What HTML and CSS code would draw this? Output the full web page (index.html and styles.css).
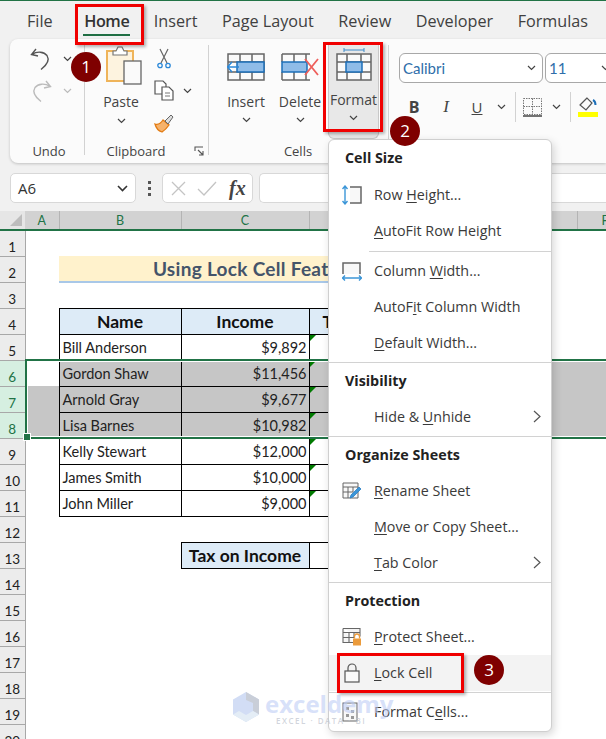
FILE: index.html
```html
<!DOCTYPE html>
<html lang="en">
<head>
<meta charset="utf-8">
<title>Lock Cell</title>
<link rel="stylesheet" href="styles.css">
</head>
<body>
<div class="app">
  <nav class="tabs">
    <span>File</span><span class="tab-home">Home</span><span>Insert</span><span>Page Layout</span><span>Review</span><span>Developer</span><span>Formulas</span>
  </nav>

  <section class="ribbon">
    <div class="group g-undo">
      <div class="g-body undo-grid">
        <svg width="22" height="24" viewBox="0 0 22 24"><path d="M6 2 1.500 7.500 8 9M2 7.500c5-3.500 12-3 15 1 2.500 4 .5 9-6 14" fill="none" stroke="#555" stroke-width="1.400"/></svg>
        <svg class="chev" width="9" height="6" viewBox="0 0 9 6"><path d="m1 1 3.500 3.500L8 1" fill="none" stroke="#444" stroke-width="1.200"/></svg>
        <svg width="22" height="24" viewBox="0 0 22 24"><path d="m16 2 4.500 5.500L14 9M20 7.500c-5-3.500-12-3-15 1-2.500 4-.5 9 6 14" fill="none" stroke="#bbb" stroke-width="1.400"/></svg>
        <svg class="chev" width="9" height="6" viewBox="0 0 9 6"><path d="m1 1 3.500 3.500L8 1" fill="none" stroke="#bbb" stroke-width="1.200"/></svg>
      </div>
      <div class="g-label undo-label">Undo</div>
    </div>

    <div class="group g-clip">
      <div class="g-body clip-body">
        <div class="big-btn paste">
          <svg class="paste-ico" width="36" height="40" viewBox="0 0 36 40"><rect x="1" y="6" width="26" height="30" fill="#fdf3df" stroke="#efb45a" stroke-width="2"/><path d="M7 6h3l2-4h4l2 4h3v4H7z" fill="#fff" stroke="#777" stroke-width="1.200"/><rect x="18" y="16" width="17" height="23" fill="#fafafa" stroke="#666" stroke-width="1.300"/></svg>
          <span>Paste</span>
          <svg class="chev" width="9" height="6" viewBox="0 0 9 6"><path d="m1 1 3.500 3.500L8 1" fill="none" stroke="#444" stroke-width="1.200"/></svg>
        </div>
        <div class="clip-tools">
          <svg class="tool-cut" width="14" height="21" viewBox="0 0 14 21"><path d="M3 1l7 14M11 1 4 15" fill="none" stroke="#666" stroke-width="1.200"/><circle cx="3" cy="17.500" r="2.200" fill="none" stroke="#2b88d8" stroke-width="1.300"/><circle cx="11" cy="17.500" r="2.200" fill="none" stroke="#2b88d8" stroke-width="1.300"/></svg>
          <div class="copy-row">
            <svg width="21" height="21" viewBox="0 0 21 21"><path d="M8 14H1V1h8l3 3v3" fill="#fff" stroke="#555" stroke-width="1.200"/><path d="M8 7h7l4 4v9H8z" fill="#fff" stroke="#555" stroke-width="1.200"/><path d="M11 13h5M11 16h5" stroke="#777"/></svg>
            <svg class="chev" width="9" height="6" viewBox="0 0 9 6"><path d="m1 1 3.500 3.500L8 1" fill="none" stroke="#444" stroke-width="1.200"/></svg>
          </div>
          <svg width="21" height="20" viewBox="0 0 21 20"><path d="M1 11c3 1 6-1 8-4l6 5c-2 3-4 5-7 7-3-1-6-4-7-8z" fill="#f6b26b" stroke="#e27b12" stroke-width="1.300"/><path d="m11 8 6-6 2 2-5 7z" fill="#ddd" stroke="#666"/></svg>
        </div>
      </div>
      <div class="g-label clip-label">Clipboard</div>
      <svg class="launcher" width="10" height="10" viewBox="0 0 10 10"><path d="M1 5V1h8M4 4l5 5M9 5v4H5" fill="none" stroke="#555" stroke-width="1.100"/></svg>
    </div>

    <div class="group g-cells">
      <div class="g-body cells-body">
        <div class="big-btn cell-btn">
          <svg width="38" height="28" viewBox="0 0 38 28"><path d="M1 1h36v26H1zM13 1v26M25 1v26M1 9h36M1 19h36" fill="#fafafa" stroke="#666" stroke-width="1.500"/><rect x="10" y="9" width="27" height="10" fill="#8fbce8" stroke="#1d6fb8" stroke-width="1.500"/><path d="M12 14H1m4-5-4.500 5L5 19" fill="#fff" stroke="#2b88d8" stroke-width="1.500"/></svg>
          <span>Insert</span>
          <svg class="chev" width="9" height="6" viewBox="0 0 9 6"><path d="m1 1 3.500 3.500L8 1" fill="none" stroke="#444" stroke-width="1.200"/></svg>
        </div>
        <div class="big-btn cell-btn">
          <svg width="38" height="28" viewBox="0 0 38 28"><path d="M1 1h28M1 27h28M1 1v8M13 1v8M25 1v8M1 19v8M13 19v8M25 19v8" fill="none" stroke="#666" stroke-width="1.500"/><rect x="1" y="9" width="25" height="10" fill="#8fbce8" stroke="#1d6fb8" stroke-width="1.500"/><path d="m24 6 13 16M37 6 24 22" stroke="#ee5f5b" stroke-width="1.800"/></svg>
          <span>Delete</span>
          <svg class="chev" width="9" height="6" viewBox="0 0 9 6"><path d="m1 1 3.500 3.500L8 1" fill="none" stroke="#444" stroke-width="1.200"/></svg>
        </div>
        <div class="big-btn format-btn">
          <svg width="36" height="35" viewBox="0 0 36 35"><path d="M8 1v4M8 3h20M28 1v4" stroke="#3c8ac9" fill="none"/><path d="M1 7h34v26H1zM1 15h34M1 25h34M11 7v26M25 7v26" fill="#fafafa" stroke="#666" stroke-width="1.500"/><rect x="10" y="15" width="16" height="10" fill="#8fbce8" stroke="#1d6fb8" stroke-width="1.500"/></svg>
          <span>Format</span>
          <svg class="chev" width="9" height="6" viewBox="0 0 9 6"><path d="m1 1 3.500 3.500L8 1" fill="none" stroke="#444" stroke-width="1.200"/></svg>
        </div>
      </div>
      <div class="g-label cells-label">Cells</div>
    </div>

    <div class="group g-font">
      <div class="combos">
        <div class="combo c-name"><span>Calibri</span><svg class="chev" width="9" height="6" viewBox="0 0 9 6"><path d="m1 1 3.500 3.500L8 1" fill="none" stroke="#444" stroke-width="1.200"/></svg></div>
        <div class="combo c-size"><span>11</span><svg class="chev" width="9" height="6" viewBox="0 0 9 6"><path d="m1 1 3.500 3.500L8 1" fill="none" stroke="#444" stroke-width="1.200"/></svg></div>
      </div>
      <div class="font-tools">
        <b class="ft ft-b">B</b><i class="ft ft-i">I</i><u class="ft ft-u">U</u>
        <svg class="chev" width="9" height="6" viewBox="0 0 9 6"><path d="m1 1 3.500 3.500L8 1" fill="none" stroke="#444" stroke-width="1.200"/></svg>
        <span class="vsep"></span>
        <svg class="bord" width="19" height="19" viewBox="0 0 19 19"><path d="M.5.5h18v16H.5zM9.500.5v16M.5 8.500h18" fill="none" stroke="#777" stroke-dasharray="1.500 1"/><path d="M0 18h19" stroke="#444" stroke-width="1.500"/></svg>
        <svg class="chev" width="9" height="6" viewBox="0 0 9 6"><path d="m1 1 3.500 3.500L8 1" fill="none" stroke="#444" stroke-width="1.200"/></svg>
        <span class="vsep"></span>
        <svg class="fill" width="20" height="20" viewBox="0 0 20 20"><path d="M9 1 2 8l6 5 6-7z" fill="none" stroke="#555" stroke-width="1.200"/><path d="M15 3c2 1 2.500 3 2.500 5" fill="none" stroke="#1d6fb8" stroke-width="2"/><rect y="15" width="20" height="5" fill="#ffff00"/></svg>
      </div>
    </div>
  </section>

  <section class="fbar">
    <div class="namebox"><span>A6</span><svg width="11" height="7" viewBox="0 0 11 7"><path d="m1 1 4.500 4.500L10 1" fill="none" stroke="#333" stroke-width="1.600"/></svg></div>
    <div class="dots"><i></i><i></i><i></i></div>
    <div class="fxbox">
      <svg width="15" height="15" viewBox="0 0 15 15"><path d="m1 1 13 13M14 1 1 14" stroke="#c4c4c4" stroke-width="1.300"/></svg>
      <svg width="20" height="15" viewBox="0 0 20 15"><path d="m1 8 6 6L19 1" fill="none" stroke="#c4c4c4" stroke-width="1.300"/></svg>
      <span class="fx">fx</span>
    </div>
    <div class="finput"></div>
  </section>

  <section class="sheet">
    <table class="grid">
      <colgroup><col class="c0"><col class="c1"><col class="c2"><col class="c3"><col class="c4"><col class="c5"><col class="c6"></colgroup>
      <thead>
        <tr><th class="corner"><span class="tri"></span></th><th class="ch">A</th><th class="ch">B</th><th class="ch">C</th><th class="ch">D</th><th class="ch">E</th><th class="ch">F</th></tr>
      </thead>
      <tbody>
        <tr><th class="rh">1</th></tr>
        <tr><th class="rh">2</th><td></td><td class="title" colspan="3">Using Lock Cell Feature</td></tr>
        <tr><th class="rh">3</th></tr>
        <tr><th class="rh">4</th><td></td><td class="hd">Name</td><td class="hd">Income</td><td class="hd hd-tax">Tax</td></tr>
        <tr><th class="rh">5</th><td></td><td class="bx">Bill Anderson</td><td class="bx num">$9,892</td><td class="bx flag"></td></tr>
        <tr class="sel"><th class="rh on">6</th><td class="plain"></td><td class="bx">Gordon Shaw</td><td class="bx num">$11,456</td><td class="bx flag"></td><td></td><td></td></tr>
        <tr class="sel"><th class="rh on">7</th><td></td><td class="bx">Arnold Gray</td><td class="bx num">$9,677</td><td class="bx flag"></td><td></td><td></td></tr>
        <tr class="sel"><th class="rh on">8</th><td></td><td class="bx">Lisa Barnes</td><td class="bx num">$10,982</td><td class="bx flag"></td><td></td><td></td></tr>
        <tr><th class="rh">9</th><td></td><td class="bx">Kelly Stewart</td><td class="bx num">$12,000</td><td class="bx flag"></td></tr>
        <tr><th class="rh">10</th><td></td><td class="bx">James Smith</td><td class="bx num">$10,000</td><td class="bx flag"></td></tr>
        <tr><th class="rh">11</th><td></td><td class="bx">John Miller</td><td class="bx num">$9,000</td><td class="bx flag"></td></tr>
        <tr><th class="rh">12</th></tr>
        <tr><th class="rh">13</th><td></td><td></td><td class="hd tax">Tax on Income</td><td class="bx"></td></tr>
        <tr><th class="rh">14</th></tr>
        <tr><th class="rh">15</th></tr>
        <tr><th class="rh">16</th></tr>
        <tr><th class="rh">17</th></tr>
        <tr><th class="rh">18</th></tr>
        <tr><th class="rh">19</th></tr>
        <tr><th class="rh">20</th></tr>
      </tbody>
    </table>
    <div class="selection"></div>
  </section>

  <aside class="menu">
    <div class="m-head m-first">Cell Size</div>
    <div class="m-item">
      <svg class="m-ico" width="20" height="20" viewBox="0 0 20 20"><path d="M8 2h11v16H8" fill="#f8f8f8" stroke="#666" stroke-width="1.500"/><path d="M3 1v18M.5 4 3 1l2.500 3M.5 16 3 19l2.500-3" fill="none" stroke="#3c96d8" stroke-width="1.400"/></svg>
      <span>Row <u>H</u>eight...</span>
    </div>
    <div class="m-item"><span><u>A</u>utoFit Row Height</span></div>
    <div class="sep sep-first"></div>
    <div class="m-item">
      <svg class="m-ico" width="20" height="20" viewBox="0 0 20 20"><path d="M1 13V2h17v11" fill="#f8f8f8" stroke="#666" stroke-width="1.500"/><path d="M0 17h20M3 14.500.5 17 3 19.500M17 14.500l2.500 2.500-2.500 2.500" fill="none" stroke="#3c96d8" stroke-width="1.400"/></svg>
      <span>Column <u>W</u>idth...</span>
    </div>
    <div class="m-item"><span>AutoF<u>i</u>t Column Width</span></div>
    <div class="m-item"><span><u>D</u>efault Width...</span></div>
    <div class="sep"></div>
    <div class="m-head">Visibility</div>
    <div class="m-item"><span>Hide &amp; <u>U</u>nhide</span><svg class="arrow" width="8" height="13" viewBox="0 0 8 13"><path d="m1 1 6 5.500L1 12" fill="none" stroke="#555" stroke-width="1.200"/></svg></div>
    <div class="sep"></div>
    <div class="m-head">Organize Sheets</div>
    <div class="m-item">
      <svg class="m-ico" width="20" height="18" viewBox="0 0 20 18"><path d="M1 1h15v15H1zM1 5h15M1 10h10M6 5v11M11 5v5" fill="#f8f8f8" stroke="#666"/><path d="m8 16 1-3 8-8 2 2-8 8z" fill="#3c96d8" stroke="#2b7fc4" stroke-width=".8"/></svg>
      <span><u>R</u>ename Sheet</span>
    </div>
    <div class="m-item"><span><u>M</u>ove or Copy Sheet...</span></div>
    <div class="m-item"><span><u>T</u>ab Color</span><svg class="arrow" width="8" height="13" viewBox="0 0 8 13"><path d="m1 1 6 5.500L1 12" fill="none" stroke="#555" stroke-width="1.200"/></svg></div>
    <div class="sep"></div>
    <div class="m-head">Protection</div>
    <div class="m-item">
      <svg class="m-ico" width="20" height="19" viewBox="0 0 20 19"><path d="M1 1h17v8M1 1v14h10M1 5h17M1 10h11M7 5v10M12 5v5" fill="#f4f4f4" stroke="#666" stroke-width="1.100"/><rect x="11" y="11" width="8" height="7" fill="#eb9b3c"/><path d="M12.500 11V9a2.500 2.500 0 0 1 5 0v2" fill="none" stroke="#eb9b3c" stroke-width="1.300"/></svg>
      <span><u>P</u>rotect Sheet...</span>
    </div>
    <div class="m-item m-hover">
      <svg class="m-ico" width="16" height="20" viewBox="0 0 16 20"><rect x="1" y="8" width="14" height="11" fill="#fafafa" stroke="#555" stroke-width="1.200"/><path d="M4 8V5a4 4 0 0 1 8 0v3" fill="none" stroke="#555" stroke-width="1.200"/></svg>
      <span><u>L</u>ock Cell</span>
    </div>
    <div class="sep"></div>
    <div class="m-item m-last">
      <svg class="m-ico" width="16" height="20" viewBox="0 0 16 20"><rect x="1" y="1" width="14" height="18" fill="#f8f8f8" stroke="#666"/><path d="M4 5h3v3H4zM9 8h3v3H9zM4 12h3v3H4zM9 14h3v3H9z" fill="#999"/></svg>
      <span>Format C<u>e</u>lls...</span>
    </div>
  </aside>

  <div class="redbox rb-home"></div>
  <div class="redbox rb-format"></div>
  <div class="redbox rb-lock"></div>
  <div class="badge b1">1</div>
  <div class="badge b2">2</div>
  <div class="badge b3">3</div>

  <div class="watermark">
    <svg width="28" height="31" viewBox="0 0 28 31"><path d="M14 0 27 7.500v15L14 30 1 22.500v-15z" fill="#d2ddf5"/><path d="M14 0 27 7.500v15l-6-3.500v-8L14 8z" fill="#c9ced8"/><path d="M1 22.500 14 30l13-7.500-6-3.500-7 4-7-4z" fill="#e4edf6"/></svg>
    <div class="wm-text"><span class="wm-name">exceldemy</span><span class="wm-sub">EXCEL · DATA · BI</span></div>
  </div>
</div>
</body>
</html>
```
FILE: styles.css
```css
* { box-sizing: border-box; }
html, body { margin: 0; padding: 0; }
body { width: 606px; height: 739px; overflow: hidden; background: #f1f1f1; font-family: "Open Sans", "Noto Sans", sans-serif; color: #333; }
.app { position: relative; width: 606px; height: 739px; overflow: hidden; border-top: 1px solid #217346; }

/* tabs */
.tabs { display: flex; gap: 24.500px; height: 38px; padding: 10px 0 0 27px; font-size: 16.200px; line-height: 21px; color: #404040; white-space: nowrap; }
.tab-home { position: relative; margin-left: 7px; font-weight: 600; letter-spacing: -.4px; color: #333; }
.tab-home::after { content: ""; position: absolute; left: -1px; right: -1px; top: 23px; height: 2px; background: #1f6e43; }

/* ribbon */
.ribbon { display: flex; height: 124px; margin-left: 10px; background: #fbfbfb; border-radius: 8px 0 0 8px; box-shadow: 0 1px 3px rgba(0,0,0,.2); font-size: 14px; color: #444; }
.group { position: relative; flex: none; display: flex; flex-direction: column; height: 124px; padding-top: 6px; }
.group::after { content: ""; position: absolute; right: 0; top: 6px; height: 110px; width: 1px; background: #d2d2d2; }
.g-body { flex: 1; min-height: 0; }
.g-label { height: 21px; font-size: 13px; line-height: 18px; text-align: center; color: #444; }
.undo-label { padding-left: 3px; }
.clip-label { padding-right: 22px; }
.chev { display: block; flex: none; }

.g-undo { width: 75px; }
.undo-grid { display: grid; grid-template-columns: 22px 9px; grid-auto-rows: 32px; column-gap: 11px; align-items: center; padding: 0 0 0 20px; margin-top: -2px; }
.g-clip { width: 124px; }
.clip-body { display: flex; padding-left: 21px; }
.big-btn { display: flex; flex-direction: column; align-items: center; font-size: 14px; line-height: 19px; }
.paste { width: 30px; }
.paste-ico { flex: none; align-self: flex-start; }
.paste > span { margin-top: 7px; }
.paste .chev { margin-top: 7px; }
.clip-tools { display: flex; flex-direction: column; align-items: flex-start; margin-left: 18px; padding-top: 3px; }
.tool-cut { margin-left: 3px; }
.copy-row { display: flex; align-items: center; gap: 8px; margin-top: 11px; }
.clip-tools > svg:last-child { margin-top: 12px; }
.launcher { position: absolute; top: 107px; left: 109px; }

.g-cells { width: 180px; }
.cells-body { display: flex; padding-left: 18px; }
.cell-btn { width: 38px; padding-top: 8px; }
.cell-btn + .cell-btn { margin-left: 16px; }
.cell-btn > span { margin-top: 11px; }
.cell-btn .chev { margin-top: 6px; }
.format-btn { width: 51px; height: 97px; margin-left: 9px; margin-top: -3px; padding-top: 5px; background: #e8e8e8; border-radius: 0 0 6px 6px; border: 1px solid #c8c8c8; border-top: 0; }
.format-btn > span { margin-top: 8px; }
.format-btn .chev { margin-top: 6px; }
.cells-label { width: 178px; }
.g-font { flex: 1 0 0; min-width: 0; padding: 14px 0 0 10px; }
.g-font::after { display: none; }
.combos { display: flex; gap: 2px; }
.combo { display: flex; align-items: center; justify-content: space-between; flex: none; height: 30px; padding: 0 6px 0 3px; border: 1px solid #a8a8a8; border-radius: 6px; background: #fff; font-size: 15px; color: #2f6eaa; font-family: "Lato", sans-serif; }
.c-name { width: 144px; }
.c-size { width: 70px; padding-right: 4px; }
.font-tools { display: flex; align-items: center; height: 22px; margin-top: 13px; padding-left: 8px; }
.ft { width: 14px; text-align: center; font-size: 16px; line-height: 20px; color: #444; }
.ft-i { margin-left: 18px; font-family: "Liberation Serif", serif; font-size: 17px; }
.ft-u { margin-left: 17px; font-size: 15px; }
.font-tools > .chev { margin-left: 13px; }
.vsep { width: 1px; height: 30px; margin: 0 7px 0 9px; background: #d2d2d2; flex: none; }
.font-tools > .vsep + svg + .chev { margin-left: 10px; }

/* formula bar */
.fbar { display: flex; align-items: stretch; height: 30px; margin-top: 10px; padding-left: 10px; }
.namebox { display: flex; align-items: center; justify-content: space-between; width: 126px; padding: 0 7px; background: #fff; border: 1px solid #d8d8d8; border-radius: 5px; font-size: 15px; color: #333; }
.dots { display: flex; flex-direction: column; justify-content: center; gap: 3px; width: 26px; align-items: center; }
.dots i { width: 3px; height: 3px; background: #555; display: block; }
.fxbox { display: flex; align-items: center; width: 91px; padding-left: 8px; background: #fff; border: 1px solid #d8d8d8; border-radius: 5px; gap: 11px; }
.fx { font-family: "Liberation Serif", serif; font-style: italic; font-weight: 700; font-size: 20px; color: #444; margin-left: 1px; }
.finput { flex: 1; margin-left: 6px; background: #fff; border: 1px solid #d8d8d8; border-radius: 5px 0 0 5px; border-right: 0; }

/* sheet */
.sheet { position: relative; margin-top: 8px; background: #fff; height: 600px; }
.grid { border-collapse: collapse; table-layout: fixed; width: 633px; font-family: "Lato", "Open Sans", sans-serif; font-size: 14.500px; color: #222; }
.c0 { width: 25px; } .c1 { width: 34px; } .c2 { width: 122px; } .c3 { width: 128px; } .c4 { width: 142px; } .c5 { width: 126px; } .c6 { width: 56px; }
.grid tbody tr { height: 26px; }
.grid thead tr { height: 19px; }
.grid th, .grid td { padding: 0; overflow: hidden; white-space: nowrap; }
.corner { position: relative; background: #e6e6e6; border-bottom: 2px solid #217346; }
.tri { position: absolute; right: 3px; bottom: 3px; width: 0; height: 0; border-left: 12px solid transparent; border-bottom: 12px solid #bdbdbd; }
.ch { background: #d2d2d2; color: #217346; font-weight: 400; font-size: 12.500px; border-right: 1px solid #b4b4b4; border-bottom: 2px solid #217346; }
.grid .rh { background: #ececec; color: #222; font-weight: 400; font-size: 13.500px; text-align: center; padding-top: 8px; border-bottom: 1px solid #a8a8a8; border-right: 1px solid #a8a8a8; }
.grid .rh.on { background: #d6efe1; color: #217346; }
.title { background: #fff2cc; border-bottom: 2px solid #a9c8e8; color: #44546a; font-weight: 700; font-size: 19px; letter-spacing: .3px; text-align: center; }
.hd { background: #ddebf7; border: 1px solid #000; font-weight: 700; font-size: 17.500px; text-align: center; color: #111; }
.grid .hd-tax { text-align: left; padding-left: 13px; }
.grid .bx { position: relative; border: 1px solid #000; padding-left: 3px; }
.grid .num { text-align: right; padding-left: 0; padding-right: 2px; }
.flag::before { content: ""; position: absolute; left: 0; top: 0; width: 0; height: 0; border-top: 6px solid #007a00; border-right: 6px solid transparent; }
.sel td { background: #c6c6c6; }
.sel td.plain { background: #fff; }
.selection { position: absolute; left: 25px; right: -6px; top: 148px; height: 80px; border: 2px solid #217346; box-shadow: inset 0 0 0 1px #fff; }
.selection::after { content: ""; position: absolute; left: -4px; bottom: -4px; width: 6px; height: 6px; background: #217346; border: 1px solid #fff; }

/* menu */
.menu { position: absolute; left: 328px; top: 138px; width: 224px; height: 593px; background: #fff; border: 1px solid #cfcfcf; border-radius: 6px; box-shadow: 2px 3px 8px rgba(0,0,0,.16); font-size: 14.300px; color: #3a3a3a; }
.m-head { height: 36px; padding-left: 16px; font-weight: 700; line-height: 36px; color: #222; }
.m-first { height: 37px; }
.m-item { position: relative; display: flex; align-items: center; height: 36px; padding: 0 0 2px 45px; white-space: nowrap; }
.m-item u { text-underline-offset: 2px; }
.m-ico { position: absolute; left: 13px; top: 50%; transform: translateY(-50%); }
.m-hover { background: #f3f3f3; }
.m-hover .m-ico { left: 15px; }
.arrow { position: absolute; right: 10px; top: 11px; }
.sep { height: 1px; margin-top: 1px; background: #d2d2d2; }
.sep-first { margin: 2px 0 1px 40px; }
.m-last { margin-top: 1px; }

/* annotations */
.redbox { position: absolute; border: 3px solid #f00000; box-shadow: 2px 2px 3px rgba(0,0,0,.3); }
.rb-home { left: 75px; top: 3px; width: 69px; height: 41px; }
.rb-format { left: 323px; top: 41px; width: 60px; height: 90px; }
.rb-lock { left: 337px; top: 652px; width: 127px; height: 40px; }
.badge { position: absolute; width: 30px; height: 30px; border-radius: 50%; background: #7f0000; color: #fff; font-size: 17px; line-height: 30px; text-align: center; }
.b1 { left: 71px; top: 51px; }
.b2 { left: 390px; top: 115px; }
.b3 { left: 474px; top: 654px; }

/* watermark */
.watermark { position: absolute; left: 232px; top: 691px; display: flex; gap: 5px; pointer-events: none; }
.wm-text { display: flex; flex-direction: column; font-family: "Open Sans", sans-serif; line-height: 1; }
.wm-name { font-size: 24px; font-weight: 700; color: rgba(190, 205, 245, .6); }
.wm-sub { margin: 1px 0 0 11px; font-size: 8px; font-weight: 600; letter-spacing: 1.500px; color: rgba(190, 195, 205, .7); }
```
